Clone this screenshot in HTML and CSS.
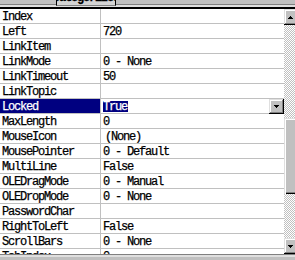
FILE: index.html
```html
<!DOCTYPE html>
<html>
<head>
<meta charset="utf-8">
<link rel="stylesheet" href="styles.css">
</head>
<body>
<div class="window">
  <div class="tabs">
    <div class="tab-gap"></div>
    <div class="tab"><span class="tab-label">Categorized</span></div>
    <div class="tab-rest"></div>
  </div>
  <div class="frame">
    <div class="grid">
      <div class="row"><div class="name">Index</div><div class="value"></div></div>
      <div class="row"><div class="name">Left</div><div class="value">720</div></div>
      <div class="row"><div class="name">LinkItem</div><div class="value"></div></div>
      <div class="row"><div class="name">LinkMode</div><div class="value">0 - None</div></div>
      <div class="row"><div class="name">LinkTimeout</div><div class="value">50</div></div>
      <div class="row"><div class="name">LinkTopic</div><div class="value"></div></div>
      <div class="row selected">
        <div class="name">Locked</div>
        <div class="value">
          <span class="sel">True</span>
          <div class="drop">
            <svg class="arrow" width="5" height="3" viewBox="0 0 5 3" shape-rendering="crispEdges"><rect x="0" y="0" width="5" height="1"/><rect x="1" y="1" width="3" height="1"/><rect x="2" y="2" width="1" height="1"/></svg>
          </div>
        </div>
      </div>
      <div class="row"><div class="name">MaxLength</div><div class="value">0</div></div>
      <div class="row"><div class="name">MouseIcon</div><div class="value pic">(None)</div></div>
      <div class="row"><div class="name">MousePointer</div><div class="value">0 - Default</div></div>
      <div class="row"><div class="name">MultiLine</div><div class="value">False</div></div>
      <div class="row"><div class="name">OLEDragMode</div><div class="value">0 - Manual</div></div>
      <div class="row"><div class="name">OLEDropMode</div><div class="value">0 - None</div></div>
      <div class="row"><div class="name">PasswordChar</div><div class="value"></div></div>
      <div class="row"><div class="name">RightToLeft</div><div class="value">False</div></div>
      <div class="row"><div class="name">ScrollBars</div><div class="value">0 - None</div></div>
      <div class="row"><div class="name">TabIndex</div><div class="value">0</div></div>
    </div>
    <div class="scrollbar">
      <div class="sbtn">
        <svg class="arrow" width="5" height="3" viewBox="0 0 5 3" shape-rendering="crispEdges"><rect x="2" y="0" width="1" height="1"/><rect x="1" y="1" width="3" height="1"/><rect x="0" y="2" width="5" height="1"/></svg>
      </div>
      <div class="track track-top"></div>
      <div class="thumb"></div>
      <div class="track track-bottom"></div>
      <div class="sbtn">
        <svg class="arrow" width="5" height="3" viewBox="0 0 5 3" shape-rendering="crispEdges"><rect x="0" y="0" width="5" height="1"/><rect x="1" y="1" width="3" height="1"/><rect x="2" y="2" width="1" height="1"/></svg>
      </div>
    </div>
  </div>
  <div class="bottom"></div>
</div>
</body>
</html>
```

FILE: styles.css
```css
html, body {
  margin: 0;
  padding: 0;
  background: #c0c0c0;
}

.window {
  width: 295px;
  height: 260px;
  overflow: hidden;
  display: flex;
  flex-direction: column;
  background: #c0c0c0;
  font-family: "Liberation Mono", monospace;
  font-size: 12px;
  letter-spacing: -1.2px;
  -webkit-text-stroke: 0.25px #000;
  color: #000;
}

.tabs {
  height: 7px;
  flex: 0 0 7px;
  display: flex;
  background: linear-gradient(#c0c0c0 0 4px, #808080 4px 5px, #dfdfdf 5px 7px);
}

.tab-gap {
  width: 56px;
  flex: 0 0 56px;
}

.tab {
  width: 58px;
  flex: 0 0 58px;
  height: 5px;
  border-left: 1px solid #000;
  border-right: 1px solid #000;
  border-bottom: 1px solid #808080;
  background: #d4d4d4;
  overflow: hidden;
  display: flex;
  justify-content: center;
}

.tab-label {
  line-height: 11px;
  margin-top: -7px;
  white-space: nowrap;
  font-weight: bold;
}

.tab-rest {
  flex: 1;
}

.frame {
  flex: 0 0 245px;
  height: 245px;
  display: flex;
  border-top: 2px solid #000;
  background: #fff;
  overflow: hidden;
}

.grid {
  width: 284px;
  flex: 0 0 284px;
  overflow: hidden;
  background: #fff;
}

.row {
  display: flex;
  height: 15px;
  box-sizing: border-box;
  border-bottom: 1px solid #c0c0c0;
}

.name {
  width: 101px;
  flex: 0 0 101px;
  box-sizing: border-box;
  border-right: 1px solid #c0c0c0;
  padding: 2px 0 0 2px;
  line-height: 12px;
  white-space: nowrap;
  overflow: hidden;
}

.value {
  flex: 1;
  padding: 2px 0 0 2px;
  line-height: 12px;
  white-space: nowrap;
  overflow: hidden;
}

.value.pic {
  padding-left: 4px;
}

.selected .name {
  background: #000080;
  color: #fff;
  -webkit-text-stroke: 0.25px #fff;
}

.selected .value {
  display: flex;
  align-items: flex-start;
  justify-content: space-between;
  padding-top: 0;
  overflow: visible;
}

.sel {
  margin-top: 2px;
  height: 11px;
  line-height: 12px;
  padding-right: 1px;
  background: #000080;
  color: #fff;
  -webkit-text-stroke: 0.25px #fff;
}

.drop {
  width: 15px;
  height: 15px;
  flex: 0 0 15px;
  box-sizing: border-box;
  background: #c0c0c0;
  box-shadow: inset -1px -1px #000, inset 1px 1px #dfdfdf, inset -2px -2px #808080, inset 2px 2px #fff;
  display: flex;
  align-items: center;
  justify-content: center;
  position: relative;
  z-index: 1;
}

.arrow {
  display: block;
  fill: #000;
}

.scrollbar {
  width: 16px;
  flex: 0 0 16px;
  display: flex;
  flex-direction: column;
}

.sbtn {
  height: 16px;
  flex: 0 0 16px;
  box-sizing: border-box;
  background: #c0c0c0;
  box-shadow: inset -1px -1px #000, inset 1px 1px #dfdfdf, inset -2px -2px #808080, inset 2px 2px #fff;
  display: flex;
  align-items: center;
  padding-left: 4px;
}

.track {
  background: repeating-conic-gradient(#fff 0 25%, #c0c0c0 0 50%) 0 0 / 2px 2px;
}

.track-top {
  flex: 0 0 93px;
}

.track-bottom {
  flex: 1;
}

.thumb {
  flex: 0 0 76px;
  background: #c0c0c0;
  box-shadow: inset 1px 1px #dfdfdf, inset 2px 2px #fff, inset -1px -1px #000, inset -2px -2px #808080;
}

.bottom {
  flex: 1;
  background: linear-gradient(#808080 0 1px, #dfdfdf 1px 3px, #c0c0c0 3px);
}
```
